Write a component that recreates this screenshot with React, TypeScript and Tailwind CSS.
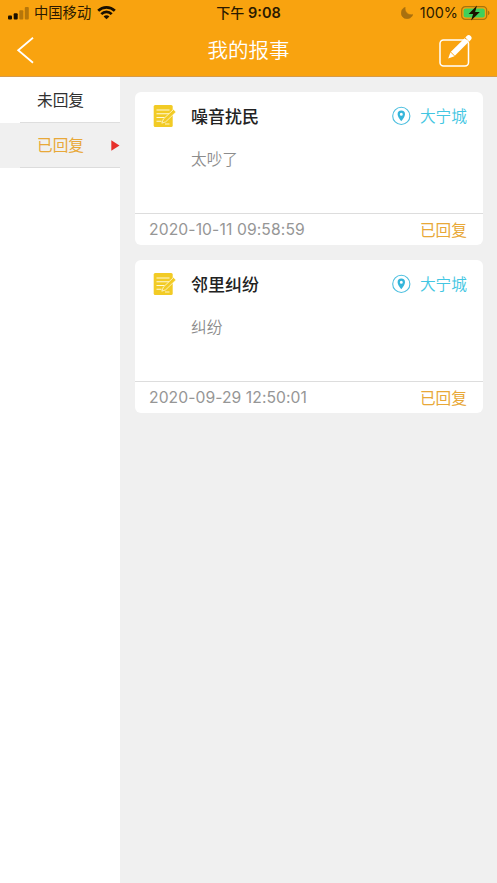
import React from 'react';

type Report = { title: string; body: string; place: string; time: string; status: string; tracking: string };

const reports: Report[] = [
  { title: '噪音扰民', body: '太吵了', place: '大宁城', time: '2020-10-11 09:58:59', status: '已回复', tracking: 'tracking-[0.1px]' },
  { title: '邻里纠纷', body: '纠纷', place: '大宁城', time: '2020-09-29 12:50:01', status: '已回复', tracking: 'tracking-[0.06px]' },
];

function StatusBar() {
  return (
    <div className="grid h-[26px] grid-cols-3 items-center text-[#2b1a00]">
      <div className="flex items-center pl-2">
        <svg width="21" height="13" viewBox="0 0 21 13" fill="#1a1000">
          <rect x="0" y="8.5" width="4" height="4" rx="1" />
          <rect x="5.7" y="6.3" width="4" height="6.2" rx="1" />
          <rect x="11.3" y="3.3" width="4" height="9.2" rx="1" opacity=".3" />
          <rect x="16.8" y="0" width="4" height="12.5" rx="1" opacity=".3" />
        </svg>
        <span className="ml-[5px] whitespace-nowrap text-[14.3px] leading-[26px]">中国移动</span>
        <svg className="ml-[6px]" width="19" height="14" viewBox="0 0 19 14" fill="none" stroke="#1a1000" strokeWidth="2.7">
          <path d="M1.2 4.8C5.8.2 13.2.2 17.8 4.8" />
          <path d="M4.3 8.1c2.9-2.9 7.5-2.9 10.4 0" />
          <path d="M9.5 13.3 6.6 10.4c1.6-1.5 4.2-1.5 5.8 0Z" fill="#1a1000" stroke="none" />
        </svg>
      </div>
      <div className="whitespace-nowrap text-center text-[14px] leading-[26px] font-medium">
        下午 <span className="text-[14.5px] font-semibold">9:08</span>
      </div>
      <div className="flex items-center justify-end pr-[6px]">
        <svg width="12" height="12" viewBox="0 0 12 12" fill="#a9700f">
          <path d="M4.2.3A5.9 5.9 0 1 0 11.8 7.4C7.6 8.6 3.4 5 4.2.3Z" stroke="#a9700f" strokeWidth=".5" />
        </svg>
        <span className="ml-[7px] text-[14.4px] leading-[26px]">100%</span>
        <svg className="ml-[3px]" width="30" height="16" viewBox="0 0 30 16">
          <rect x=".7" y="1.7" width="25" height="12.6" rx="3.6" fill="none" stroke="#a8740d" strokeWidth="1.3" />
          <rect x="2.6" y="3.6" width="21.2" height="8.8" rx="2" fill="#3fcf5b" />
          <path d="M27 5.8c2 .5 2 3.9 0 4.4Z" fill="#a8740d" />
          <path d="M16 .6 7.6 9h4.5l-2 6.4L18.800 7h-4.700Z" fill="#1a1000" />
        </svg>
      </div>
    </div>
  );
}

function Header() {
  return (
    <header className="h-[77px] border-b border-[#d79a48] bg-[#f9a30f]">
      <StatusBar />
      <div className="grid h-[50px] grid-cols-3 items-center text-white">
        <svg className="ml-4" width="19" height="28" viewBox="0 0 19 28" fill="none" stroke="#fff" strokeWidth="1.8">
          <path d="M17 .8 2.2 13.3 17 25.8" />
        </svg>
        <h1 className="whitespace-nowrap text-center text-[20.5px] leading-[48px] font-[350]">我的报事</h1>
        <svg className="mr-6 justify-self-end" width="34" height="34" viewBox="0 0 34 34">
          <rect x="1" y="6" width="28.5" height="26" rx="3.5" fill="none" stroke="#fff" strokeWidth="1.5" />
          <g transform="translate(9.2 24.5) rotate(-45)" fill="#fff">
            <path d="M0 0 6-2.8v5.6Z" />
            <path d="M6.6-2.8H26v5.6H6.6Z" />
            <path d="M27-2.8h2a2.8 2.8 0 0 1 0 5.6h-2Z" />
          </g>
        </svg>
      </div>
    </header>
  );
}

function Sidebar() {
  return (
    <nav className="w-[120px] shrink-0 bg-white text-[15.7px]">
      <div className="h-[46px] pl-5">
        <div className="h-[46px] border-b border-[#dedede] pl-[17px] leading-[47px] text-[#303030]">未回复</div>
      </div>
      <div className="h-[45px] bg-[#f0f0f0] pl-5">
        <div className="flex h-[45px] items-center justify-between border-b border-[#dcdcdc] pl-[17px] text-[#e8a838]">
          <span className="pt-[2px] leading-[42px]">已回复</span>
          <svg width="9" height="11" viewBox="0 0 9 11" fill="#e7302b">
            <path d="M.3.3 8.5 5.5.3 10.7Z" />
          </svg>
        </div>
      </div>
    </nav>
  );
}

function NoteIcon() {
  return (
    <svg width="24" height="24" viewBox="0 0 24 24" fill="none">
      <rect x=".7" y="1" width="19" height="22" rx="1.5" fill="#f2cb25" />
      <path d="M3.5 6h13M3.5 9.8h13M3.5 13.5h8M3.5 17.2h5" stroke="#fff9d8" strokeWidth="1.1" />
      <path d="m8.8 19.2 1.6-4.2L20.5 5.5l2.4 2.5-10.2 9.8Z" fill="#f2cb25" stroke="#fff9d8" strokeWidth=".8" />
      <path d="M12 20h4.5" stroke="#fff9d8" strokeWidth=".9" />
    </svg>
  );
}

function PinIcon() {
  return (
    <svg width="20" height="20" viewBox="0 0 20 20">
      <circle cx="10.3" cy="9.9" r="8.6" fill="none" stroke="#4cbfdf" strokeWidth="1.1" />
      <path fillRule="evenodd" fill="#35b5da" d="M10.3 4.6a3.7 3.7 0 0 0-3.7 3.7c0 2.7 3.7 7 3.7 7s3.7-4.3 3.7-7A3.7 3.7 0 0 0 10.3 4.6Zm0 2.2a1.5 1.5 0 1 1 0 3 1.5 1.5 0 0 1 0-3Z" />
    </svg>
  );
}

function Card({ report }: { report: Report }) {
  return (
    <article className="h-[153px] rounded-[6px] bg-white">
      <div className="h-[122px] border-b border-[#dddddd] pl-[18px] pr-4">
        <div className="flex h-[48px] items-center">
          <NoteIcon />
          <h2 className="ml-[14px] pt-[2px] text-[17px] leading-[46px] font-medium text-[#222]">{report.title}</h2>
          <div className="ml-auto flex items-center gap-[9px] text-[15.7px] font-[350] text-[#42c6e2]">
            <PinIcon />
            <span className="pt-[2px] leading-[46px]">{report.place}</span>
          </div>
        </div>
        <p className="pl-[38px] pt-2 text-[15.7px] leading-6 font-[350] text-[#8c8c8c]">{report.body}</p>
      </div>
      <div className="flex h-[31px] items-center justify-between pl-[14px] pr-4 text-[15.7px]">
        <time className={`text-[#969696] ${report.tracking}`}>{report.time}</time>
        <span className="pt-[2px] leading-[29px] text-[#e8a838]">{report.status}</span>
      </div>
    </article>
  );
}

export default function App() {
  return (
    <div className="flex h-[883px] w-[497px] flex-col overflow-hidden bg-[#f0f0f0] font-['Inter','Noto_Sans_CJK_SC',sans-serif]">
      <Header />
      <div className="flex flex-1">
        <Sidebar />
        <main className="flex flex-1 flex-col gap-[15px] pt-[15px] pr-[14px] pl-[15px]">
          {reports.map((r) => (
            <Card key={r.time} report={r} />
          ))}
        </main>
      </div>
    </div>
  );
}
